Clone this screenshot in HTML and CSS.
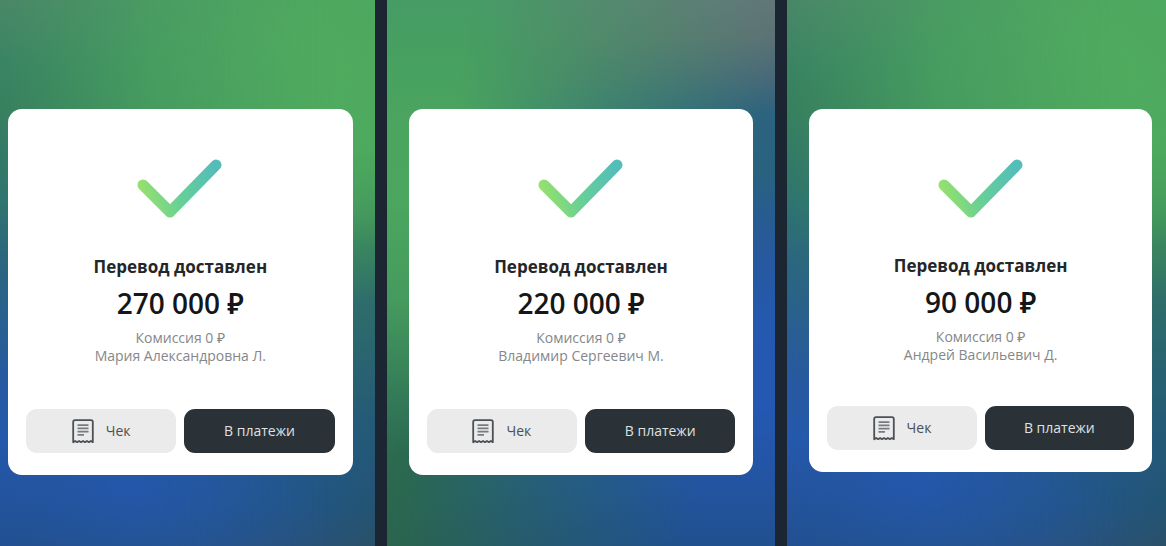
FILE: index.html
```html
<!DOCTYPE html>
<html lang="ru">
<head>
<meta charset="utf-8">
<meta name="viewport" content="width=device-width, initial-scale=1">
<title>Перевод доставлен</title>
<link rel="stylesheet" href="styles.css">
</head>
<body>
<svg class="defs" aria-hidden="true">
  <defs>
    <linearGradient id="tick" gradientUnits="userSpaceOnUse" x1="4" y1="30" x2="78" y2="12">
      <stop offset="0" stop-color="#95e06e"/>
      <stop offset="0.45" stop-color="#68d096"/>
      <stop offset="1" stop-color="#55bdb8"/>
    </linearGradient>
    <symbol id="check" viewBox="0 0 86 60">
      <path d="M6 26 33 53 79 6" fill="none" stroke="url(#tick)" stroke-width="11" stroke-linecap="round" stroke-linejoin="round"/>
    </symbol>
    <symbol id="receipt" viewBox="0 0 22 25">
      <path d="M1.2 23.2V3Q1.2 1.2 3 1.2H19Q20.8 1.2 20.8 3V23.2L18.8 22 16.9 23.2 14.9 22 13 23.2 11 22 9 23.2 7.1 22 5.1 23.2 3.2 22Z" fill="none" stroke="#4a5157" stroke-width="1.8" stroke-linejoin="round"/>
      <path d="M5.5 6.2H16.5M5.5 9.4H16.5M5.5 12.6H16.5M5.5 15.8H12" stroke="#777b80" stroke-width="1.8"/>
    </symbol>
  </defs>
</svg>
<main class="screens">
  <section class="screen screen-first">
    <article class="card">
      <svg class="check" aria-hidden="true"><use href="#check"/></svg>
      <h2 class="title">Перевод доставлен</h2>
      <p class="amount">270 000 ₽</p>
      <p class="meta">Комиссия 0 ₽<br>Мария Александровна Л.</p>
      <div class="actions">
        <button class="button button-light" type="button"><svg class="receipt" aria-hidden="true"><use href="#receipt"/></svg>Чек</button>
        <button class="button button-dark" type="button">В платежи</button>
      </div>
    </article>
  </section>
  <section class="screen screen-middle">
    <article class="card">
      <svg class="check" aria-hidden="true"><use href="#check"/></svg>
      <h2 class="title">Перевод доставлен</h2>
      <p class="amount">220 000 ₽</p>
      <p class="meta">Комиссия 0 ₽<br>Владимир Сергеевич М.</p>
      <div class="actions">
        <button class="button button-light" type="button"><svg class="receipt" aria-hidden="true"><use href="#receipt"/></svg>Чек</button>
        <button class="button button-dark" type="button">В платежи</button>
      </div>
    </article>
  </section>
  <section class="screen screen-last">
    <article class="card card-compact">
      <svg class="check" aria-hidden="true"><use href="#check"/></svg>
      <h2 class="title">Перевод доставлен</h2>
      <p class="amount">90 000 ₽</p>
      <p class="meta">Комиссия 0 ₽<br>Андрей Васильевич Д.</p>
      <div class="actions">
        <button class="button button-light" type="button"><svg class="receipt" aria-hidden="true"><use href="#receipt"/></svg>Чек</button>
        <button class="button button-dark" type="button">В платежи</button>
      </div>
    </article>
  </section>
</main>
</body>
</html>
```
FILE: styles.css
```css
* {
  box-sizing: border-box;
}

body {
  margin: 0;
  background: #1c2633;
  font-family: "Open Sans", "Noto Sans", sans-serif;
}

.defs {
  position: absolute;
  width: 0;
  height: 0;
}

.screens {
  display: grid;
  grid-template-columns: 375fr 389fr 379fr;
  gap: 12px;
  min-height: 100vh;
}

.screen {
  position: relative;
  isolation: isolate;
  padding: 109px 22px 72px;
}

.screen-first {
  padding-left: 8px;
}

.screen-last {
  padding-right: 14px;
}

/* The left edge's colours lie below; the right edge's fade in over them. */
.screen::before {
  content: "";
  position: absolute;
  inset: 0;
  z-index: -1;
}

.screen-first,
.screen-last {
  background: linear-gradient(#4a8868, #3a8463 12%, #38805f 20%, #2f7470 37%, #2b6680 48%, #285a9f 68%, #2559ac 80%, #225092);
}

.screen-first::before,
.screen-last::before {
  background:
    radial-gradient(circle at 77% 10%, #50ac5e, #50ac5e00 45%),
    radial-gradient(ellipse 75% 32% at 30% 88%, #2459b4, #2459b400),
    linear-gradient(#479f62, #4ba55f 12%, #4aa75e 27%, #3f905c 39%, #357c60 45%, #2e6d6b 55%, #255a75 77%, #22546f 92%, #2a5068);
  mask-image: linear-gradient(to right, transparent, #000a 40%, #000 90%);
}

.screen-middle {
  background: linear-gradient(#479c66, #46a060 10%, #4ba55f 22%, #4ba65f 37%, #459a5d 55%, #337a58 73%, #2c6b4f 83%, #2b664a);
}

.screen-middle::before {
  background: linear-gradient(#63757a, #5c7175 7%, #45687a 15%, #2c637e 21%, #28627f 31%, #27599b 45%, #2459b0 60%, #2458b2 74%, #2355a5 86%, #21508e);
  mask-image: linear-gradient(100deg, transparent 18%, #0008 50%, #000 82%);
}

.card {
  display: flex;
  flex-direction: column;
  align-items: center;
  padding: 50px 18px 22px;
  border-radius: 14px;
  background: #fff;
  text-align: center;
}

.check {
  width: 86px;
  height: 60px;
}

.title {
  margin: 36px 0 0;
  color: #242628;
  font-size: 17px;
  font-weight: 700;
  line-height: 24px;
}

.amount {
  margin: 8px 0 0;
  color: #151617;
  font-size: 28px;
  font-weight: 600;
  line-height: 32px;
}

.meta {
  margin: 10px 0 0;
  color: #85878a;
  font-size: 14px;
  line-height: 18px;
}

.actions {
  display: grid;
  grid-template-columns: 1fr 1fr;
  gap: 8px;
  width: 100%;
  margin-top: 44px;
}

.card-compact .title {
  margin-top: 35px;
}

.card-compact .actions {
  margin-top: 42px;
}

.button {
  display: flex;
  align-items: center;
  justify-content: center;
  gap: 12px;
  height: 44px;
  padding: 0;
  border: 0;
  border-radius: 11px;
  font: 14px/20px "Open Sans", "Noto Sans", sans-serif;
}

.button-light {
  background: #ebebeb;
  color: #4a4f53;
}

.button-dark {
  background: #2b3237;
  color: #dfe1e2;
}

.receipt {
  width: 22px;
  height: 25px;
}
```
